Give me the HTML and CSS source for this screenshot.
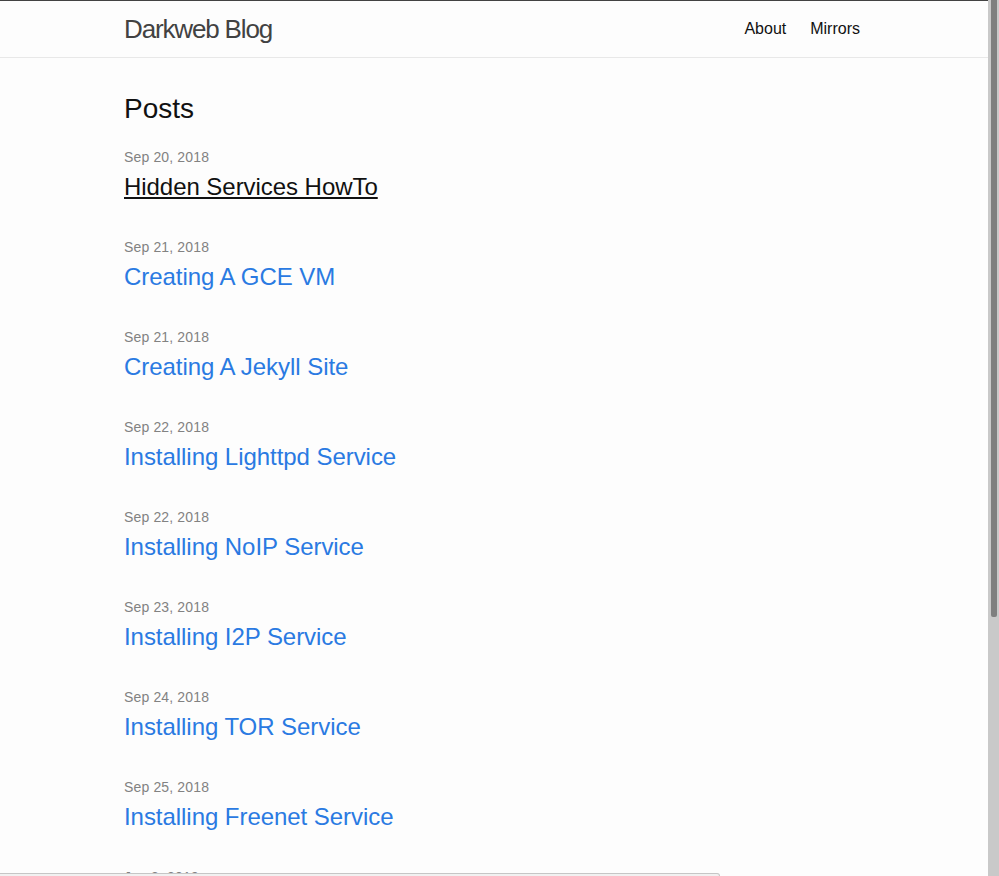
FILE: index.html
```html
<!DOCTYPE html>
<html lang="en">
<head>
<meta charset="utf-8">
<title>Darkweb Blog</title>
<link rel="stylesheet" href="styles.css">
</head>
<body>
<div class="app">
  <div class="page">
    <header class="site-header">
      <div class="wrapper header-row">
        <a class="site-title" href="#">Darkweb Blog</a>
        <nav class="site-nav">
          <a class="page-link" href="#">About</a>
          <a class="page-link" href="#">Mirrors</a>
        </nav>
      </div>
    </header>
    <main class="page-content">
      <div class="wrapper">
        <h2 class="post-list-heading">Posts</h2>
        <ul class="post-list">
          <li><span class="post-meta">Sep 20, 2018</span><h3><a class="post-link hover" href="#">Hidden Services HowTo</a></h3></li>
          <li><span class="post-meta">Sep 21, 2018</span><h3><a class="post-link" href="#">Creating A GCE VM</a></h3></li>
          <li><span class="post-meta">Sep 21, 2018</span><h3><a class="post-link" href="#">Creating A Jekyll Site</a></h3></li>
          <li><span class="post-meta">Sep 22, 2018</span><h3><a class="post-link" href="#">Installing Lighttpd Service</a></h3></li>
          <li><span class="post-meta">Sep 22, 2018</span><h3><a class="post-link" href="#">Installing NoIP Service</a></h3></li>
          <li><span class="post-meta">Sep 23, 2018</span><h3><a class="post-link" href="#">Installing I2P Service</a></h3></li>
          <li><span class="post-meta">Sep 24, 2018</span><h3><a class="post-link" href="#">Installing TOR Service</a></h3></li>
          <li><span class="post-meta">Sep 25, 2018</span><h3><a class="post-link" href="#">Installing Freenet Service</a></h3></li>
          <li><span class="post-meta">Jan 3, 2019</span><h3><a class="post-link" href="#">Installing ZeroNet Service</a></h3></li>
        </ul>
      </div>
    </main>
  </div>
  <div class="scrollbar"><div class="thumb"></div></div>
</div>
<div class="status-bubble"></div>
</body>
</html>
```
FILE: styles.css
```css
html, body {
  margin: 0;
  padding: 0;
  height: 100%;
  overflow: hidden;
}
body {
  background: #fdfdfd;
  color: #111;
  font-family: "Liberation Sans", Arial, sans-serif;
  font-size: 16px;
  line-height: 1.5;
}
.app {
  display: flex;
  height: 100%;
}
.page {
  flex: 1;
  min-width: 0;
  overflow: hidden;
}
.scrollbar {
  width: 11px;
  background: #c9c9c9;
  display: flex;
  justify-content: center;
}
.thumb {
  width: 6px;
  height: 617px;
  background: #7f7f7f;
  border-radius: 0 0 2px 2px;
}
.wrapper {
  max-width: 740px;
  margin: 0 auto;
  padding: 0 30px;
}
.site-header {
  border-top: 1px solid #424242;
  border-bottom: 1px solid #e8e8e8;
  height: 56px;
}
.header-row {
  display: flex;
  justify-content: space-between;
  align-items: center;
  height: 56px;
}
.site-title {
  font-size: 26px;
  font-weight: 300;
  letter-spacing: -1.15px;
  line-height: 54px;
  color: #424242;
  text-decoration: none;
}
.site-nav {
  display: flex;
  gap: 24px;
  padding-right: 4px;
  line-height: 56px;
}
.page-link {
  color: #111;
  text-decoration: none;
}
.page-content {
  padding: 30px 0;
}
.post-list-heading {
  font-size: 28px;
  font-weight: 400;
  line-height: 42px;
  margin: 0 0 15px;
}
.post-list {
  list-style: none;
  margin: 0;
  padding: 0;
}
.post-list li {
  margin-bottom: 30px;
}
.post-meta {
  font-size: 14px;
  color: #828282;
  letter-spacing: 0.15px;
}
.post-list h3 {
  margin: 0;
  font-size: 24px;
  font-weight: 400;
  line-height: 36px;
}
.post-link {
  color: #2a7ae2;
  text-decoration: none;
  letter-spacing: -0.05px;
}
.post-link.hover {
  color: #111;
  text-decoration: underline;
}
.status-bubble {
  position: fixed;
  left: 0;
  bottom: -21px;
  width: 719px;
  height: 22px;
  background: #f1f1f1;
  border: 1px solid #c6c6c6;
  border-left: none;
  border-radius: 0 3px 0 0;
}
```
